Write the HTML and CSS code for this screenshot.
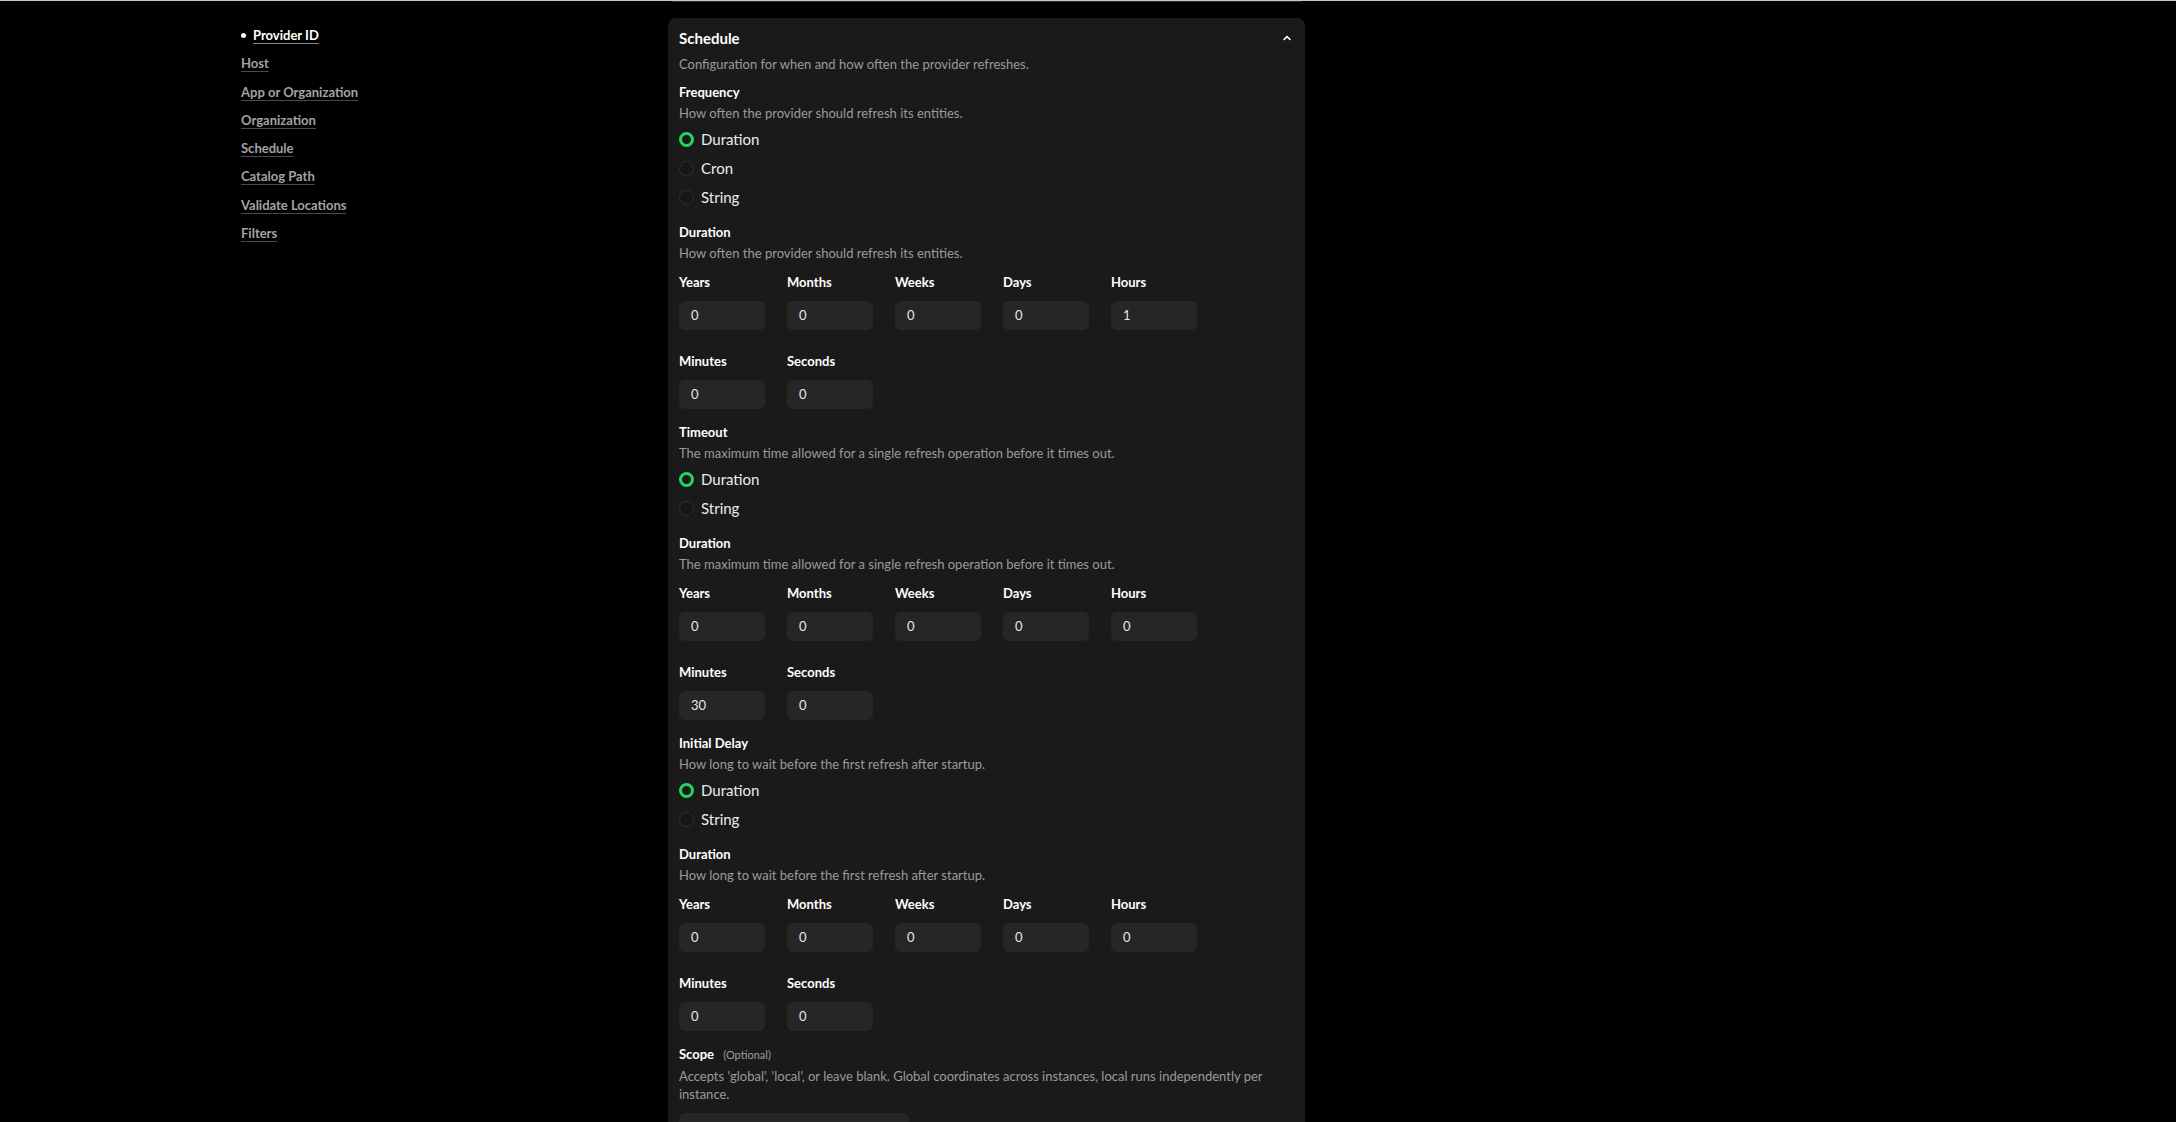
FILE: index.html
```html
<!DOCTYPE html>
<html lang="en">
<head>
<meta charset="utf-8">
<title>Schedule</title>
<link rel="stylesheet" href="styles.css">
</head>
<body>
<div class="topline"></div>
<div class="layout">
  <nav class="toc">
    <ul>
      <li class="toc-item active"><a href="#">Provider ID</a></li>
      <li class="toc-item"><a href="#">Host</a></li>
      <li class="toc-item"><a href="#">App or Organization</a></li>
      <li class="toc-item"><a href="#">Organization</a></li>
      <li class="toc-item"><a href="#">Schedule</a></li>
      <li class="toc-item"><a href="#">Catalog Path</a></li>
      <li class="toc-item"><a href="#">Validate Locations</a></li>
      <li class="toc-item"><a href="#">Filters</a></li>
    </ul>
  </nav>
  <main class="content">
    <div class="prev-tail"></div>
    <section class="card">
      <header class="card-head">
        <h2 class="card-title">Schedule</h2>
        <svg class="chevron" width="12" height="12" viewBox="0 0 12 12"><path d="M3 7.5 L6 4.5 L9 7.5" fill="none" stroke="#ffffff" stroke-width="1.6" stroke-linecap="round" stroke-linejoin="round"/></svg>
      </header>
      <p class="desc intro">Configuration for when and how often the provider refreshes.</p>

      <div class="field">
        <div class="label">Frequency</div>
        <p class="desc">How often the provider should refresh its entities.</p>
        <div class="radios">
          <label class="radio"><span class="dot checked"></span>Duration</label>
          <label class="radio"><span class="dot"></span>Cron</label>
          <label class="radio"><span class="dot"></span>String</label>
        </div>
      </div>

      <div class="field sub">
        <div class="label">Duration</div>
        <p class="desc">How often the provider should refresh its entities.</p>
        <div class="units">
          <div class="unit"><div class="unit-label">Years</div><div class="input">0</div></div>
          <div class="unit"><div class="unit-label">Months</div><div class="input">0</div></div>
          <div class="unit"><div class="unit-label">Weeks</div><div class="input">0</div></div>
          <div class="unit"><div class="unit-label">Days</div><div class="input">0</div></div>
          <div class="unit"><div class="unit-label">Hours</div><div class="input">1</div></div>
          <div class="unit"><div class="unit-label">Minutes</div><div class="input">0</div></div>
          <div class="unit"><div class="unit-label">Seconds</div><div class="input">0</div></div>
        </div>
      </div>

      <div class="field next">
        <div class="label">Timeout</div>
        <p class="desc">The maximum time allowed for a single refresh operation before it times out.</p>
        <div class="radios">
          <label class="radio"><span class="dot checked"></span>Duration</label>
          <label class="radio"><span class="dot"></span>String</label>
        </div>
      </div>

      <div class="field sub">
        <div class="label">Duration</div>
        <p class="desc">The maximum time allowed for a single refresh operation before it times out.</p>
        <div class="units">
          <div class="unit"><div class="unit-label">Years</div><div class="input">0</div></div>
          <div class="unit"><div class="unit-label">Months</div><div class="input">0</div></div>
          <div class="unit"><div class="unit-label">Weeks</div><div class="input">0</div></div>
          <div class="unit"><div class="unit-label">Days</div><div class="input">0</div></div>
          <div class="unit"><div class="unit-label">Hours</div><div class="input">0</div></div>
          <div class="unit"><div class="unit-label">Minutes</div><div class="input">30</div></div>
          <div class="unit"><div class="unit-label">Seconds</div><div class="input">0</div></div>
        </div>
      </div>

      <div class="field next">
        <div class="label">Initial Delay</div>
        <p class="desc">How long to wait before the first refresh after startup.</p>
        <div class="radios">
          <label class="radio"><span class="dot checked"></span>Duration</label>
          <label class="radio"><span class="dot"></span>String</label>
        </div>
      </div>

      <div class="field sub">
        <div class="label">Duration</div>
        <p class="desc">How long to wait before the first refresh after startup.</p>
        <div class="units">
          <div class="unit"><div class="unit-label">Years</div><div class="input">0</div></div>
          <div class="unit"><div class="unit-label">Months</div><div class="input">0</div></div>
          <div class="unit"><div class="unit-label">Weeks</div><div class="input">0</div></div>
          <div class="unit"><div class="unit-label">Days</div><div class="input">0</div></div>
          <div class="unit"><div class="unit-label">Hours</div><div class="input">0</div></div>
          <div class="unit"><div class="unit-label">Minutes</div><div class="input">0</div></div>
          <div class="unit"><div class="unit-label">Seconds</div><div class="input">0</div></div>
        </div>
      </div>

      <div class="field next scope">
        <div class="label">Scope <span class="optional">(Optional)</span></div>
        <p class="desc wrap">Accepts 'global', 'local', or leave blank. Global coordinates across instances, local runs independently per instance.</p>
        <div class="input wide"></div>
      </div>
    </section>
  </main>
</div>
</body>
</html>
```

FILE: styles.css
```css
* { box-sizing: border-box; }

html, body {
  margin: 0;
  padding: 0;
  background: #000000;
  color: #ffffff;
  font-family: "Lato", "Noto Sans", sans-serif;
}

.topline {
  height: 1px;
  background: #c8c8c8;
}

.layout {
  display: flex;
  align-items: flex-start;
  padding-left: 241px;
}

.toc {
  width: 427px;
  flex: none;
  padding-top: 24px;
}

.toc ul {
  list-style: none;
  margin: 0;
  padding: 0;
  display: flex;
  flex-direction: column;
  gap: 8.3px;
}

.toc-item {
  line-height: 20px;
  font-size: 13px;
  font-weight: 700;
}

.toc-item a {
  color: #a3a3a3;
  text-decoration: underline;
  text-decoration-color: #4a4a4a;
  text-underline-offset: 3px;
}

.toc-item.active::before {
  content: "";
  display: inline-block;
  width: 5px;
  height: 5px;
  border-radius: 50%;
  background: #ffffff;
  margin: 0 7px 2px 0;
  vertical-align: middle;
}

.toc-item.active a {
  color: #ffffff;
  text-decoration-color: #8a8a8a;
}

.content {
  width: 637px;
  flex: none;
}

.prev-tail {
  height: 1px;
  margin: 0 4px;
  background: #2c2c2c;
}

.card {
  margin-top: 16px;
  background: #1a1a1a;
  border-radius: 8px;
  padding: 10px 11px 40px;
}

.card-head {
  display: flex;
  justify-content: space-between;
  align-items: center;
  height: 20px;
}

.card-title {
  margin: 0;
  font-size: 15px;
  font-weight: 700;
  line-height: 20px;
}

.chevron {
  margin-right: 1px;
}

.desc {
  margin: 2px 0 0;
  font-size: 13px;
  line-height: 18px;
  color: #9a9a9a;
}

.desc.intro {
  margin-top: 7px;
}

.field {
  margin-top: 9px;
}

.field.sub {
  margin-top: 13px;
}

.field.next {
  margin-top: 13px;
}

.label {
  font-size: 13px;
  font-weight: 700;
  line-height: 20px;
  color: #ffffff;
}

.optional {
  font-size: 11px;
  font-weight: 400;
  color: #9a9a9a;
  margin-left: 6px;
}

.radios {
  margin-top: 5px;
  display: flex;
  flex-direction: column;
  gap: 5px;
}

.radio {
  display: flex;
  align-items: center;
  height: 24px;
  font-size: 15px;
  color: #ececec;
  gap: 7px;
}

.dot {
  width: 15px;
  height: 15px;
  border-radius: 50%;
  border: 1px solid #303030;
  background: #171717;
  flex: none;
}

.dot.checked {
  border: 3px solid #1ed760;
  background: #1a1a1a;
}

.units {
  margin-top: 10px;
  display: grid;
  grid-template-columns: repeat(5, 86px);
  column-gap: 22px;
  row-gap: 21px;
}

.unit-label {
  font-size: 13px;
  font-weight: 700;
  line-height: 20px;
}

.input {
  margin-top: 9px;
  height: 29px;
  border-radius: 6px;
  background: #262626;
  font-size: 13px;
  line-height: 29px;
  padding: 0 12px;
  color: #e6e6e6;
}

.input.wide {
  width: 230px;
  margin-top: 10px;
}
```
